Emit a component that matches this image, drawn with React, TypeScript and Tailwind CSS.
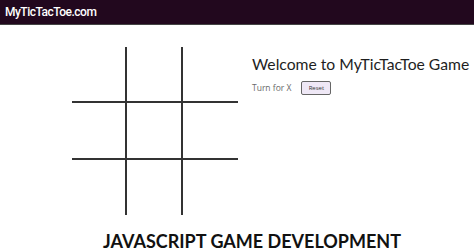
import React from "react";

export default function App() {
  const cells = Array.from({ length: 9 }, (_, i) => i);
  return (
    <div className="w-[474px] h-[252px] bg-white overflow-hidden flex flex-col">
      <div className="h-[25px] bg-[#22081e] border-b border-[#444] flex items-center pl-[5px] shrink-0">
        <span className="text-white text-[12px] font-medium font-['Roboto',sans-serif] leading-none tracking-[-0.5px]">
          MyTicTacToe.com
        </span>
      </div>
      <div className="flex pl-[72px] pt-[22px]">
        <div className="grid grid-cols-[55px_56px_55px] grid-rows-[56px_57px_55px]">
          {cells.map((i) => {
            const col = i % 3;
            const row = Math.floor(i / 3);
            return (
              <div
                key={i}
                className={
                  (col < 2 ? "border-r-2 " : "") +
                  (row < 2 ? "border-b-2 " : "") +
                  "border-[#333333]"
                }
              />
            );
          })}
        </div>
        <div className="ml-[14px] flex flex-col pt-[6px]">
          <h1 className="whitespace-nowrap text-[15.7px] leading-[22px] text-[#1e1e1e] font-['Lato',sans-serif]">
            Welcome to MyTicTacToe Game
          </h1>
          <div className="flex items-center mt-[6px]">
            <span className="text-[8.5px] text-[#6a6a6a] font-['Open_Sans',sans-serif]">Turn for X</span>
            <button className="ml-[10px] w-[30px] h-[14px] rounded-[2px] border border-[#666] bg-[#efe8f6] text-[6px] text-[#333] font-['Open_Sans',sans-serif] leading-none flex items-center justify-center">
              Reset
            </button>
          </div>
        </div>
      </div>
      <div className="flex justify-center pt-[17px] pl-[30px]">
        <span className="text-[18px] font-bold text-[#111] font-['Lato',sans-serif] leading-none whitespace-nowrap">
          JAVASCRIPT GAME DEVELOPMENT
        </span>
      </div>
    </div>
  );
}
